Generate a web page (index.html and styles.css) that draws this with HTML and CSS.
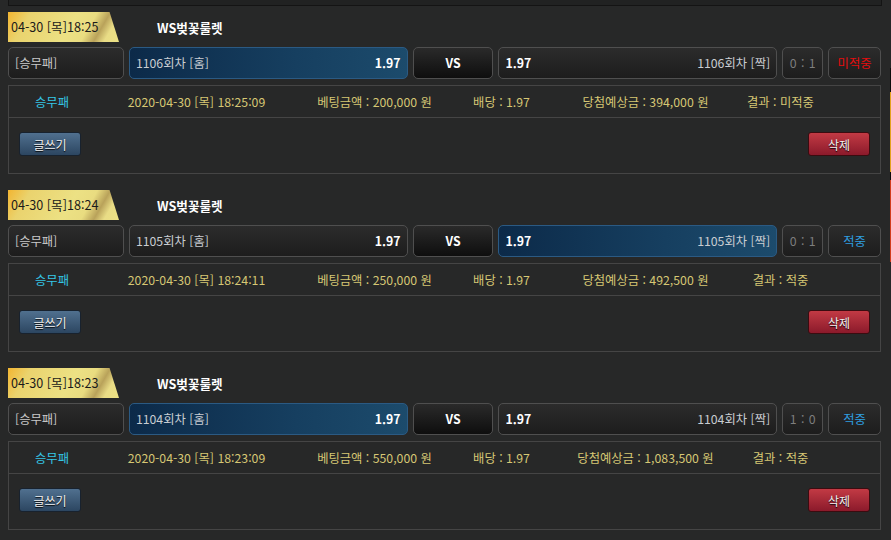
FILE: index.html
```html
<!DOCTYPE html>
<html lang="ko">
<head>
<meta charset="utf-8">
<title>베팅내역</title>
<link rel="stylesheet" href="styles.css">
</head>
<body>
<div class="topbar"></div>
<div class="edge-strip">
  <i class="seg seg-black1"></i><i class="seg seg-orange"></i><i class="seg seg-black2"></i><i class="seg seg-red"></i>
</div>
<main class="list">
  <section class="bet">
    <div class="bet-head"><span class="tag">04-30 [목]18:25</span><span class="game">WS벚꽃룰렛</span></div>
    <div class="pick-row">
      <div class="box type">[승무패]</div>
      <div class="box team sel"><span class="tname">1106회차 [홈]</span><b class="odd">1.97</b></div>
      <div class="box vs">VS</div>
      <div class="box team"><b class="odd">1.97</b><span class="tname">1106회차 [짝]</span></div>
      <div class="box score">0 : 1</div>
      <div class="box result miss">미적중</div>
    </div>
    <div class="detail">
      <div class="detail-info">
        <span class="cyan">승무패</span>
        <span>2020-04-30 [목] 18:25:09</span>
        <span>베팅금액 : 200,000 원</span>
        <span>배당 : 1.97</span>
        <span>당첨예상금 : 394,000 원</span>
        <span>결과 : 미적중</span>
      </div>
      <div class="detail-actions"><button class="btn btn-write">글쓰기</button><button class="btn btn-del">삭제</button></div>
    </div>
  </section>

  <section class="bet">
    <div class="bet-head"><span class="tag">04-30 [목]18:24</span><span class="game">WS벚꽃룰렛</span></div>
    <div class="pick-row">
      <div class="box type">[승무패]</div>
      <div class="box team"><span class="tname">1105회차 [홈]</span><b class="odd">1.97</b></div>
      <div class="box vs">VS</div>
      <div class="box team sel"><b class="odd">1.97</b><span class="tname">1105회차 [짝]</span></div>
      <div class="box score">0 : 1</div>
      <div class="box result hit">적중</div>
    </div>
    <div class="detail">
      <div class="detail-info">
        <span class="cyan">승무패</span>
        <span>2020-04-30 [목] 18:24:11</span>
        <span>베팅금액 : 250,000 원</span>
        <span>배당 : 1.97</span>
        <span>당첨예상금 : 492,500 원</span>
        <span>결과 : 적중</span>
      </div>
      <div class="detail-actions"><button class="btn btn-write">글쓰기</button><button class="btn btn-del">삭제</button></div>
    </div>
  </section>

  <section class="bet">
    <div class="bet-head"><span class="tag">04-30 [목]18:23</span><span class="game">WS벚꽃룰렛</span></div>
    <div class="pick-row">
      <div class="box type">[승무패]</div>
      <div class="box team sel"><span class="tname">1104회차 [홈]</span><b class="odd">1.97</b></div>
      <div class="box vs">VS</div>
      <div class="box team"><b class="odd">1.97</b><span class="tname">1104회차 [짝]</span></div>
      <div class="box score">1 : 0</div>
      <div class="box result hit">적중</div>
    </div>
    <div class="detail">
      <div class="detail-info">
        <span class="cyan">승무패</span>
        <span>2020-04-30 [목] 18:23:09</span>
        <span>베팅금액 : 550,000 원</span>
        <span>배당 : 1.97</span>
        <span>당첨예상금 : 1,083,500 원</span>
        <span>결과 : 적중</span>
      </div>
      <div class="detail-actions"><button class="btn btn-write">글쓰기</button><button class="btn btn-del">삭제</button></div>
    </div>
  </section>
</main>
</body>
</html>
```

FILE: styles.css
```css
* { box-sizing: border-box; }

html, body {
  margin: 0;
  padding: 0;
  background: #272828;
  font-family: "Noto Sans CJK KR", "Noto Sans", sans-serif;
  font-size: 12px;
  color: #cfcfcf;
  width: 891px;
  height: 540px;
  overflow: hidden;
  position: relative;
}

.topbar {
  margin-left: 8px;
  width: 874px;
  height: 6px;
  background: #212222;
  border: 1px solid #141414;
  border-top: none;
}

.edge-strip {
  position: absolute;
  left: 890px;
  top: 68px;
  width: 1px;
  display: flex;
  flex-direction: column;
}
.seg { display: block; width: 1px; }
.seg-black1 { height: 24px; background: #0c0c0c; }
.seg-orange { height: 80px; background: #e3a21e; }
.seg-black2 { height: 8px; background: #0c0c0c; }
.seg-red { height: 82px; background: #d23c1c; }

.list {
  padding-left: 8px;
  width: 881px;
  padding-top: 6px;
}

.bet { margin-bottom: 16px; }

.bet-head {
  display: flex;
  align-items: center;
  height: 30px;
}

.tag {
  width: 111px;
  height: 30px;
  line-height: 30px;
  padding-left: 3px;
  color: #1a1a1a;
  font-size: 12.6px;
  background: linear-gradient(120deg, #f2b531 0%, #ead36e 18%, #ece184 55%, #e9dc80 70%, #b9a25a 80%, #e9dc86 88%, #ece184 100%);
  clip-path: polygon(0 0, 91.5% 0, 100% 100%, 0 100%);
}

.game {
  margin-left: 38px;
  color: #ffffff;
  font-weight: bold;
  font-size: 12.6px;
}

.pick-row {
  display: flex;
  gap: 5px;
  margin-top: 5px;
  height: 32px;
}

.box {
  height: 32px;
  border: 1px solid #4f4f4f;
  border-radius: 5px;
  background: linear-gradient(#2c2c2c, #1d1d1d);
  display: flex;
  align-items: center;
  padding: 0 6px;
  color: #c9c9c9;
  font-size: 12.3px;
}

.type { width: 116px; }

.team {
  width: 279px;
  justify-content: space-between;
}
.team.sel {
  background: linear-gradient(90deg, #0c2a49 0%, #163f60 60%, #1c4b6c 100%);
  border-color: #2b5a83;
}
.odd { color: #ffffff; font-weight: bold; }
.tname { color: #c9cdd2; }

.vs {
  width: 81px;
  justify-content: center;
  font-weight: bold;
  color: #ffffff;
  background: linear-gradient(#2a2a2a, #0e0e0e);
}

.score {
  width: 41px;
  justify-content: center;
  color: #7e7e7e;
  padding: 0;
  word-spacing: 1px;
}

.result {
  width: 53px;
  justify-content: center;
  padding: 0;
}
.miss { color: #e50d0d; }
.hit { color: #2f9fe0; }

.detail {
  margin-top: 6px;
  border: 1px solid #454545;
}

.detail-info {
  display: grid;
  grid-template-columns: 86px 203px 153px 101px 187px 83px 1fr;
  height: 32px;
  align-items: center;
  border-bottom: 1px solid #454545;
  color: #d6c774;
  font-size: 12.3px;
}
.detail-info span { text-align: center; white-space: nowrap; }
.detail-info .cyan { color: #35c7e6; }

.detail-actions {
  display: flex;
  justify-content: space-between;
  padding: 14px 10px 16px 10px;
  height: 55px;
}

.btn {
  width: 62px;
  height: 24px;
  border-radius: 3px;
  font-family: inherit;
  font-size: 12px;
  color: #f2f2f2;
  text-shadow: 0 1px 1px #000;
  padding: 0;
  cursor: pointer;
}
.btn-write {
  background: linear-gradient(#50708f, #2c4661);
  border: 1px solid #18222e;
}
.btn-del {
  background: linear-gradient(#c23a44, #8b1a2b);
  border: 1px solid #3a0c10;
}
```
